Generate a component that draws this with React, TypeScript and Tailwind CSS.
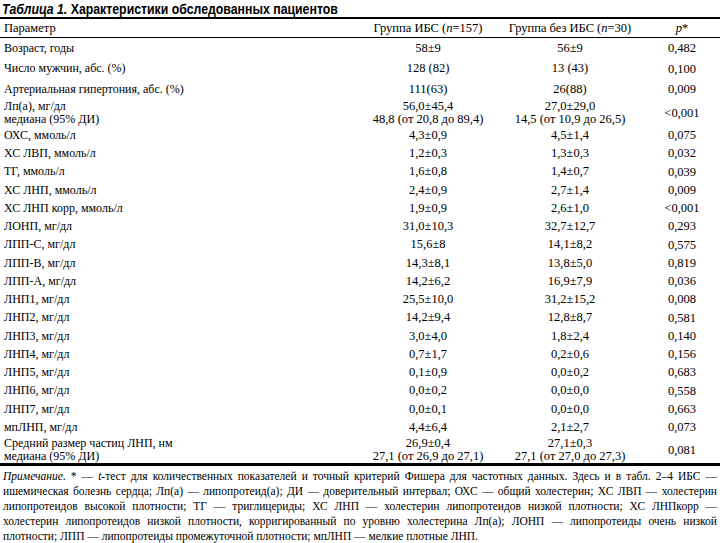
import React from "react";

type Row = {
  label: string[];
  ibs: string[];
  noIbs: string[];
  p: string;
  h: string;
};

const rows: Row[] = [
  { label: ["Возраст, годы"], ibs: ["58±9"], noIbs: ["56±9"], p: "0,482", h: "h-[20px]" },
  { label: ["Число мужчин, абс. (%)"], ibs: ["128 (82)"], noIbs: ["13 (43)"], p: "0,100", h: "h-[21px]" },
  { label: ["Артериальная гипертония, абс. (%)"], ibs: ["111(63)"], noIbs: ["26(88)"], p: "0,009", h: "h-[20px]" },
  {
    label: ["Лп(а), мг/дл", "медиана (95% ДИ)"],
    ibs: ["56,0±45,4", "48,8 (от 20,8 до 89,4)"],
    noIbs: ["27,0±29,0", "14,5 (от 10,9 до 26,5)"],
    p: "<0,001",
    h: "h-[27px]",
  },
  { label: ["ОХС, ммоль/л"], ibs: ["4,3±0,9"], noIbs: ["4,5±1,4"], p: "0,075", h: "h-[18.25px]" },
  { label: ["ХС ЛВП, ммоль/л"], ibs: ["1,2±0,3"], noIbs: ["1,3±0,3"], p: "0,032", h: "h-[18.25px]" },
  { label: ["ТГ, ммоль/л"], ibs: ["1,6±0,8"], noIbs: ["1,4±0,7"], p: "0,039", h: "h-[18.25px]" },
  { label: ["ХС ЛНП, ммоль/л"], ibs: ["2,4±0,9"], noIbs: ["2,7±1,4"], p: "0,009", h: "h-[18.25px]" },
  { label: ["ХС ЛНП корр, ммоль/л"], ibs: ["1,9±0,9"], noIbs: ["2,6±1,0"], p: "<0,001", h: "h-[18.25px]" },
  { label: ["ЛОНП, мг/дл"], ibs: ["31,0±10,3"], noIbs: ["32,7±12,7"], p: "0,293", h: "h-[18.25px]" },
  { label: ["ЛПП-С, мг/дл"], ibs: ["15,6±8"], noIbs: ["14,1±8,2"], p: "0,575", h: "h-[18.25px]" },
  { label: ["ЛПП-В, мг/дл"], ibs: ["14,3±8,1"], noIbs: ["13,8±5,0"], p: "0,819", h: "h-[18.25px]" },
  { label: ["ЛПП-А, мг/дл"], ibs: ["14,2±6,2"], noIbs: ["16,9±7,9"], p: "0,036", h: "h-[18.25px]" },
  { label: ["ЛНП1, мг/дл"], ibs: ["25,5±10,0"], noIbs: ["31,2±15,2"], p: "0,008", h: "h-[18.25px]" },
  { label: ["ЛНП2, мг/дл"], ibs: ["14,2±9,4"], noIbs: ["12,8±8,7"], p: "0,581", h: "h-[18.25px]" },
  { label: ["ЛНП3, мг/дл"], ibs: ["3,0±4,0"], noIbs: ["1,8±2,4"], p: "0,140", h: "h-[18.25px]" },
  { label: ["ЛНП4, мг/дл"], ibs: ["0,7±1,7"], noIbs: ["0,2±0,6"], p: "0,156", h: "h-[18.25px]" },
  { label: ["ЛНП5, мг/дл"], ibs: ["0,1±0,9"], noIbs: ["0,0±0,2"], p: "0,683", h: "h-[18.25px]" },
  { label: ["ЛНП6, мг/дл"], ibs: ["0,0±0,2"], noIbs: ["0,0±0,0"], p: "0,558", h: "h-[18.25px]" },
  { label: ["ЛНП7, мг/дл"], ibs: ["0,0±0,1"], noIbs: ["0,0±0,0"], p: "0,663", h: "h-[18.25px]" },
  { label: ["мпЛНП, мг/дл"], ibs: ["4,4±6,4"], noIbs: ["2,1±2,7"], p: "0,073", h: "h-[18.25px]" },
  {
    label: ["Средний размер частиц ЛНП, нм", "медиана (95% ДИ)"],
    ibs: ["26,9±0,4", "27,1 (от 26,9 до 27,1)"],
    noIbs: ["27,1±0,3", "27,1 (от 27,0 до 27,3)"],
    p: "0,081",
    h: "h-[27px]",
  },
];

const noteLines: React.ReactNode[] = [
  <>
    <i>Примечание.</i> * — <i>t</i>-тест для количественных показателей и точный критерий Фишера для частотных
    данных. Здесь и в табл. 2–4 ИБС —
  </>,
  <>
    ишемическая болезнь сердца; Лп(а) — липопротеид(а); ДИ — доверительный интервал; ОХС — общий холестерин; ХС
    ЛВП — холестерин
  </>,
  <>
    липопротеидов высокой плотности; ТГ — триглицериды; ХС ЛНП — холестерин липопротеидов низкой плотности; ХС
    ЛНПкорр —
  </>,
  <>
    холестерин липопротеидов низкой плотности, корригированный по уровню холестерина Лп(а); ЛОНП — липопротеиды
    очень низкой
  </>,
  <>плотности; ЛПП — липопротеиды промежуточной плотности; мпЛНП — мелкие плотные ЛНП.</>,
];

function Lines({ lines }: { lines: string[] }) {
  return (
    <>
      {lines.map((l, i) => (
        <div key={i} className="leading-[12.5px]">
          {l}
        </div>
      ))}
    </>
  );
}

export default function App() {
  return (
    <div className="w-[720px] h-[543px] bg-white text-black overflow-hidden [font-family:'Liberation_Serif',serif]">
      <h1 className="pl-[2px] h-[17px] text-[15px] leading-[17px] font-bold whitespace-nowrap [font-family:'Liberation_Sans',sans-serif]">
        <span className="inline-block origin-left scale-x-[0.82]">
          <span className="italic">Таблица 1.</span> Характеристики обследованных пациентов
        </span>
      </h1>
      <div className="h-[2px] bg-black" />
      <div className="grid grid-cols-[360px_136px_148px_76px] h-[19px] items-center text-[12.5px] leading-[15px] border-b border-black">
        <div className="pl-[4px]">Параметр</div>
        <div className="text-center">
          Группа ИБС (<i>n</i>=157)
        </div>
        <div className="text-center">
          Группа без ИБС (<i>n</i>=30)
        </div>
        <div className="text-center">
          <i>p</i>*
        </div>
      </div>
      <div className="text-[12.5px]">
        {rows.map((r, i) => (
          <div key={i} className={`grid grid-cols-[360px_136px_148px_76px] items-center ${r.h}`}>
            <div className="pl-[4px] text-[12px]">
              <Lines lines={r.label} />
            </div>
            <div className="text-center">
              <Lines lines={r.ibs} />
            </div>
            <div className="text-center">
              <Lines lines={r.noIbs} />
            </div>
            <div className="text-center leading-[12px]">{r.p}</div>
          </div>
        ))}
      </div>
      <div className="h-[3px] bg-black" />
      <div className="px-[3px] pt-[3px] text-[11.5px] leading-[15px]">
        {noteLines.map((l, i) => (
          <div key={i} className={i < noteLines.length - 1 ? "text-justify [text-align-last:justify]" : ""}>
            {l}
          </div>
        ))}
      </div>
    </div>
  );
}
